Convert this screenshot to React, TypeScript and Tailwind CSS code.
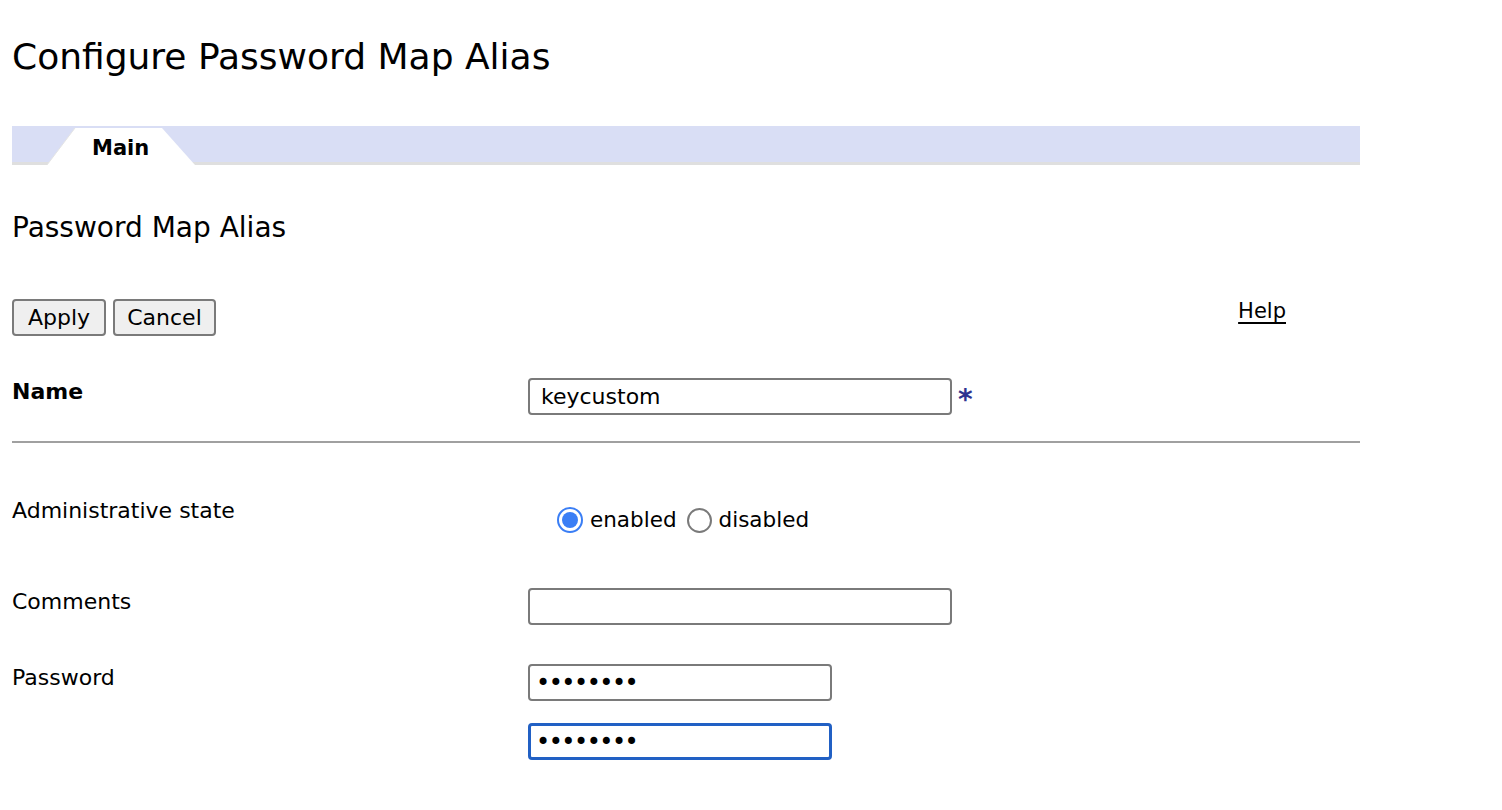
import React from 'react';

const font = { fontFamily: '"DejaVu Sans", Verdana, sans-serif' };

function Radio({ checked, label }: { checked: boolean; label: string }) {
  return (
    <label className="flex items-center">
      {checked ? (
        <span className="flex h-[26px] w-[26px] items-center justify-center rounded-full border-[2px] border-[#3a7ef5] bg-white">
          <span className="h-[16px] w-[16px] rounded-full bg-[#3a7ef5]" />
        </span>
      ) : (
        <span className="h-[25px] w-[25px] rounded-full border-[2px] border-[#7a7a7a] bg-white" />
      )}
      <span className="ml-[7px] text-[21.5px] leading-none text-black">{label}</span>
    </label>
  );
}

export default function App() {
  return (
    <div className="min-h-screen bg-white pl-[12px] text-black" style={font}>
      <h1 className="pt-[36px] text-[36px] leading-[42px] font-normal">Configure Password Map Alias</h1>

      {/* tab strip */}
      <div className="relative mt-[48px] h-[39px] w-[1348px] border-b-[3px] border-[#dfdfdf] bg-[#d9def5]">
        <div className="absolute bottom-[-3px] left-[35px] h-[38px] w-[148px]">
          <svg width="148" height="38" viewBox="0 0 148 38" className="absolute inset-0">
            <polygon points="0,38 28,1 115,1 148,38" fill="#ffffff" />
            <line x1="0" y1="38" x2="28" y2="1" stroke="#e4e4e4" strokeWidth="1" />
          </svg>
          <span className="absolute left-[45px] top-[11px] text-[21px] font-bold leading-none">Main</span>
        </div>
      </div>

      <h2 className="mt-[48px] text-[28px] leading-[30px] font-normal">Password Map Alias</h2>

      <div className="mt-[56px] flex w-[1348px] items-start">
        <button className="h-[37px] w-[94px] rounded-[4px] border-2 border-[#7a7a7a] bg-[#efefef] text-[22px]">Apply</button>
        <button className="ml-[7px] h-[37px] w-[103px] rounded-[4px] border-2 border-[#7a7a7a] bg-[#efefef] text-[22px]">Cancel</button>
        <a href="#" className="ml-auto mr-[74px] mt-[-3px] text-[21px] text-black underline underline-offset-[4px]">Help</a>
      </div>

      <div className="mt-[42px] grid w-[1348px] grid-cols-[516px_1fr]">
        <div className="pt-[2px] text-[22px] font-bold leading-[24px]">Name</div>
        <div className="flex items-center">
          <input
            readOnly
            defaultValue="keycustom"
            className="h-[37px] w-[424px] rounded-[4px] border-2 border-[#7a7a7a] bg-white px-[11px] text-[22px] outline-none"
          />
          <span className="ml-[6px] mt-[6px] text-[28px] font-bold leading-none text-[#2d3290]">*</span>
        </div>
      </div>

      <div className="mt-[26px] h-[2px] w-[1348px] bg-[#a0a0a0]" />

      <div className="grid w-[1348px] grid-cols-[516px_1fr]">
        <div className="pt-[56px] text-[22px] leading-[24px]">Administrative state</div>
        <div className="flex items-center gap-[10px] pl-[29px] pt-[64px]">
          <Radio checked label="enabled" />
          <Radio checked={false} label="disabled" />
        </div>

        <div className="pt-[57px] text-[22px] leading-[24px]">Comments</div>
        <div className="pt-[55px]">
          <input
            readOnly
            className="h-[37px] w-[424px] rounded-[4px] border-2 border-[#7a7a7a] bg-white px-[11px] text-[22px] outline-none"
          />
        </div>

        <div className="pt-[41px] text-[22px] leading-[24px]">Password</div>
        <div className="flex flex-col gap-[22px] pt-[39px]">
          <input
            readOnly
            type="password"
            defaultValue="abcdefgh"
            className="h-[37px] w-[304px] rounded-[4px] border-2 border-[#7a7a7a] bg-white px-[6px] text-[24px] tracking-[-1.5px] outline-none"
          />
          <input
            readOnly
            type="password"
            defaultValue="abcdefgh"
            className="h-[37px] w-[304px] rounded-[4px] border-[3px] border-[#2160c4] bg-white px-[5px] text-[24px] tracking-[-1.5px] outline-none"
          />
        </div>
      </div>
    </div>
  );
}
